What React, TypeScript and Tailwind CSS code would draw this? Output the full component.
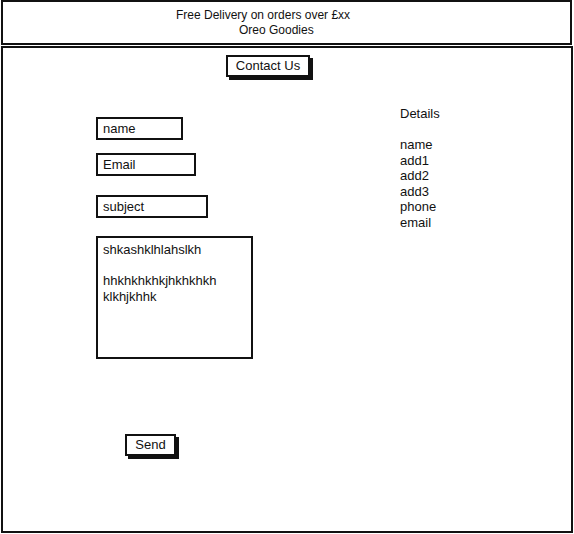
import React from "react";

const font = { fontFamily: '"Liberation Sans", Arial, sans-serif' };

function Field({ label, w }: { label: string; w: string }) {
  return (
    <div className={`${w} h-[23px] border-2 border-[#111] flex items-center pl-[5px] text-[13px] leading-[15.5px] text-[#111]`}>
      {label}
    </div>
  );
}

export default function App() {
  return (
    <div className="w-[574px] h-[534px] bg-white overflow-hidden text-[#111]" style={font}>
      <header className="ml-[1px] w-[571px] h-[45px] border-2 border-[#111] pt-[6px] text-[12px] leading-[15px]">
        <div className="pl-[173px]">Free Delivery on orders over £xx</div>
        <div className="pl-[236px]">Oreo Goodies</div>
      </header>
      <main className="ml-[1px] mt-[1px] w-[572px] h-[487px] border-2 border-[#111]">
        <div className="ml-[223px] mt-[7px] w-[84px] h-[22px] border-2 border-[#111] shadow-[3px_3px_0_#111] flex items-center justify-center text-[13px]">
          Contact Us
        </div>
        <div className="mt-[29px] flex">
          <div className="w-[397px] pl-[93px] flex flex-col items-start">
            <div className="mt-[11px]">
              <Field label="name" w="w-[87px]" />
            </div>
            <div className="mt-[13px]">
              <Field label="Email" w="w-[100px]" />
            </div>
            <div className="mt-[19px]">
              <Field label="subject" w="w-[112px]" />
            </div>
            <div className="mt-[18px] w-[157px] h-[123px] border-2 border-[#111] pl-[5px] pt-[4px] text-[13px] leading-[15.5px]">
              <div>shkashklhlahslkh</div>
              <div>&nbsp;</div>
              <div>hhkhkhkhkjhkhkhkh</div>
              <div>klkhjkhhk</div>
            </div>
            <div className="mt-[75px] ml-[29px] w-[51px] h-[22px] border-2 border-[#111] shadow-[3px_3px_0_#111] flex items-center justify-center text-[13px]">
              Send
            </div>
          </div>
          <div className="text-[13px] leading-[15.5px]">
            <div>Details</div>
            <div>&nbsp;</div>
            <div>name</div>
            <div>add1</div>
            <div>add2</div>
            <div>add3</div>
            <div>phone</div>
            <div>email</div>
          </div>
        </div>
      </main>
    </div>
  );
}
